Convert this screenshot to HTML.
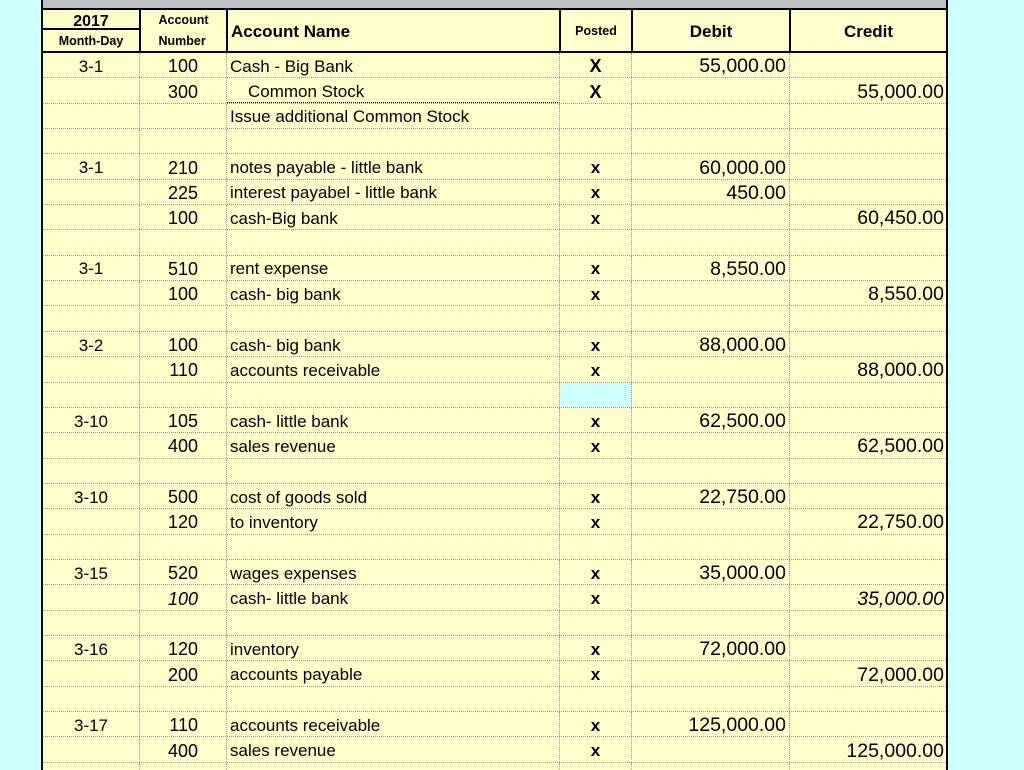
<!DOCTYPE html>
<html><head><style>
*{margin:0;padding:0;box-sizing:border-box}
html,body{width:1024px;height:770px;overflow:hidden}
body{background:#ccffff;position:relative;font-family:"Liberation Sans",Arial,sans-serif;color:#000}
#t{position:absolute;left:41px;top:0;width:907px;height:770px;overflow:hidden;background:#ffffcc;border-left:2px solid #000;border-right:2px solid #000}
#bar{position:absolute;left:0;top:0;width:903px;height:10px;background:#c0c0c0;border-bottom:2px solid #000}
.h{position:absolute;top:10px;height:43px;border-right:2px solid #000;border-bottom:2px solid #000;font-weight:bold;display:flex;align-items:center;justify-content:center}
.r{position:absolute;left:0;width:903px;height:25.35px;border-bottom:1px dotted #999;display:flex}
.r div{height:100%;border-right:1px dotted #999;display:flex;align-items:center;font-size:17px;white-space:nowrap;padding-top:3px}
.c1{width:97px;justify-content:center}
.c2{width:87px;justify-content:flex-end;padding-right:28px;font-size:18px!important}
.c3{width:333px;padding-left:3px}
.c4{width:72px;justify-content:center;font-weight:bold}
.c5{width:158px;justify-content:flex-end;padding-right:3px;font-size:19.5px!important}
.c6{width:156px;justify-content:flex-end;padding-right:2px;font-size:19.5px!important;border-right:none!important}
</style></head><body>
<div id="t">
<div id="bar"></div>
<div class="h" style="left:0;width:98px;flex-direction:column;justify-content:flex-start">
<div style="height:20px;width:100%;border-bottom:2px solid #000;text-align:center;font-size:16px;line-height:23px">2017</div>
<div style="font-size:12.5px;line-height:22px">Month-Day</div></div>
<div class="h" style="left:98px;width:87px;font-size:12.5px;flex-direction:column;line-height:21px">Account<br>Number</div>
<div class="h" style="left:185px;width:333px;justify-content:flex-start;padding-left:3px;font-size:17px;padding-top:2px">Account Name</div>
<div class="h" style="left:518px;width:72px;font-size:12.5px">Posted</div>
<div class="h" style="left:590px;width:158px;font-size:17px;padding-top:2px">Debit</div>
<div class="h" style="left:748px;width:155px;font-size:17px;border-right:none;padding-top:2px">Credit</div>

<div class="r" style="top:53px"><div class="c1">3-1</div><div class="c2">100</div><div class="c3">Cash - Big Bank</div><div class="c4" style="font-size:18px">X</div><div class="c5">55,000.00</div><div class="c6"></div></div>
<div class="r" style="top:78.35px"><div class="c1"></div><div class="c2">300</div><div class="c3" style="padding-left:21px;border-bottom:1px dotted #000">Common Stock</div><div class="c4" style="font-size:18px">X</div><div class="c5"></div><div class="c6">55,000.00</div></div>
<div class="r" style="top:103.7px"><div class="c1"></div><div class="c2"></div><div class="c3">Issue additional Common Stock</div><div class="c4"></div><div class="c5"></div><div class="c6"></div></div>
<div class="r" style="top:129.05px"><div class="c1"></div><div class="c2"></div><div class="c3"></div><div class="c4"></div><div class="c5"></div><div class="c6"></div></div>
<div class="r" style="top:154.4px"><div class="c1">3-1</div><div class="c2">210</div><div class="c3">notes payable - little bank</div><div class="c4">x</div><div class="c5">60,000.00</div><div class="c6"></div></div>
<div class="r" style="top:179.75px"><div class="c1"></div><div class="c2">225</div><div class="c3">interest payabel - little bank</div><div class="c4">x</div><div class="c5">450.00</div><div class="c6"></div></div>
<div class="r" style="top:205.1px"><div class="c1"></div><div class="c2">100</div><div class="c3">cash-Big bank</div><div class="c4">x</div><div class="c5"></div><div class="c6">60,450.00</div></div>
<div class="r" style="top:230.45px"><div class="c1"></div><div class="c2"></div><div class="c3"></div><div class="c4"></div><div class="c5"></div><div class="c6"></div></div>
<div class="r" style="top:255.8px"><div class="c1">3-1</div><div class="c2">510</div><div class="c3">rent expense</div><div class="c4">x</div><div class="c5">8,550.00</div><div class="c6"></div></div>
<div class="r" style="top:281.15px"><div class="c1"></div><div class="c2">100</div><div class="c3">cash- big bank</div><div class="c4">x</div><div class="c5"></div><div class="c6">8,550.00</div></div>
<div class="r" style="top:306.5px"><div class="c1"></div><div class="c2"></div><div class="c3"></div><div class="c4"></div><div class="c5"></div><div class="c6"></div></div>
<div class="r" style="top:331.85px"><div class="c1">3-2</div><div class="c2">100</div><div class="c3">cash- big bank</div><div class="c4">x</div><div class="c5">88,000.00</div><div class="c6"></div></div>
<div class="r" style="top:357.2px"><div class="c1"></div><div class="c2">110</div><div class="c3">accounts receivable</div><div class="c4">x</div><div class="c5"></div><div class="c6">88,000.00</div></div>
<div class="r" style="top:382.55px"><div class="c1"></div><div class="c2"></div><div class="c3"></div><div class="c4" style="background:#ccffff"></div><div class="c5"></div><div class="c6"></div></div>
<div class="r" style="top:407.9px"><div class="c1">3-10</div><div class="c2">105</div><div class="c3">cash- little bank</div><div class="c4">x</div><div class="c5">62,500.00</div><div class="c6"></div></div>
<div class="r" style="top:433.25px"><div class="c1"></div><div class="c2">400</div><div class="c3">sales revenue</div><div class="c4">x</div><div class="c5"></div><div class="c6">62,500.00</div></div>
<div class="r" style="top:458.6px"><div class="c1"></div><div class="c2"></div><div class="c3"></div><div class="c4"></div><div class="c5"></div><div class="c6"></div></div>
<div class="r" style="top:483.95px"><div class="c1">3-10</div><div class="c2">500</div><div class="c3">cost of goods sold</div><div class="c4">x</div><div class="c5">22,750.00</div><div class="c6"></div></div>
<div class="r" style="top:509.3px"><div class="c1"></div><div class="c2">120</div><div class="c3">to inventory</div><div class="c4">x</div><div class="c5"></div><div class="c6">22,750.00</div></div>
<div class="r" style="top:534.65px"><div class="c1"></div><div class="c2"></div><div class="c3"></div><div class="c4"></div><div class="c5"></div><div class="c6"></div></div>
<div class="r" style="top:560px"><div class="c1">3-15</div><div class="c2">520</div><div class="c3">wages expenses</div><div class="c4">x</div><div class="c5">35,000.00</div><div class="c6"></div></div>
<div class="r" style="top:585.35px"><div class="c1"></div><div class="c2" style="font-style:italic">100</div><div class="c3">cash- little bank</div><div class="c4">x</div><div class="c5"></div><div class="c6" style="font-style:italic">35,000.00</div></div>
<div class="r" style="top:610.7px"><div class="c1"></div><div class="c2"></div><div class="c3"></div><div class="c4"></div><div class="c5"></div><div class="c6"></div></div>
<div class="r" style="top:636.05px"><div class="c1">3-16</div><div class="c2">120</div><div class="c3">inventory</div><div class="c4">x</div><div class="c5">72,000.00</div><div class="c6"></div></div>
<div class="r" style="top:661.4px"><div class="c1"></div><div class="c2">200</div><div class="c3">accounts payable</div><div class="c4">x</div><div class="c5"></div><div class="c6">72,000.00</div></div>
<div class="r" style="top:686.75px"><div class="c1"></div><div class="c2"></div><div class="c3"></div><div class="c4"></div><div class="c5"></div><div class="c6"></div></div>
<div class="r" style="top:712.1px"><div class="c1">3-17</div><div class="c2">110</div><div class="c3">accounts receivable</div><div class="c4">x</div><div class="c5">125,000.00</div><div class="c6"></div></div>
<div class="r" style="top:737.45px"><div class="c1"></div><div class="c2">400</div><div class="c3">sales revenue</div><div class="c4">x</div><div class="c5"></div><div class="c6">125,000.00</div></div>
<div class="r" style="top:762.8px"><div class="c1"></div><div class="c2"></div><div class="c3"></div><div class="c4"></div><div class="c5"></div><div class="c6"></div></div>
</div>
</body></html>
